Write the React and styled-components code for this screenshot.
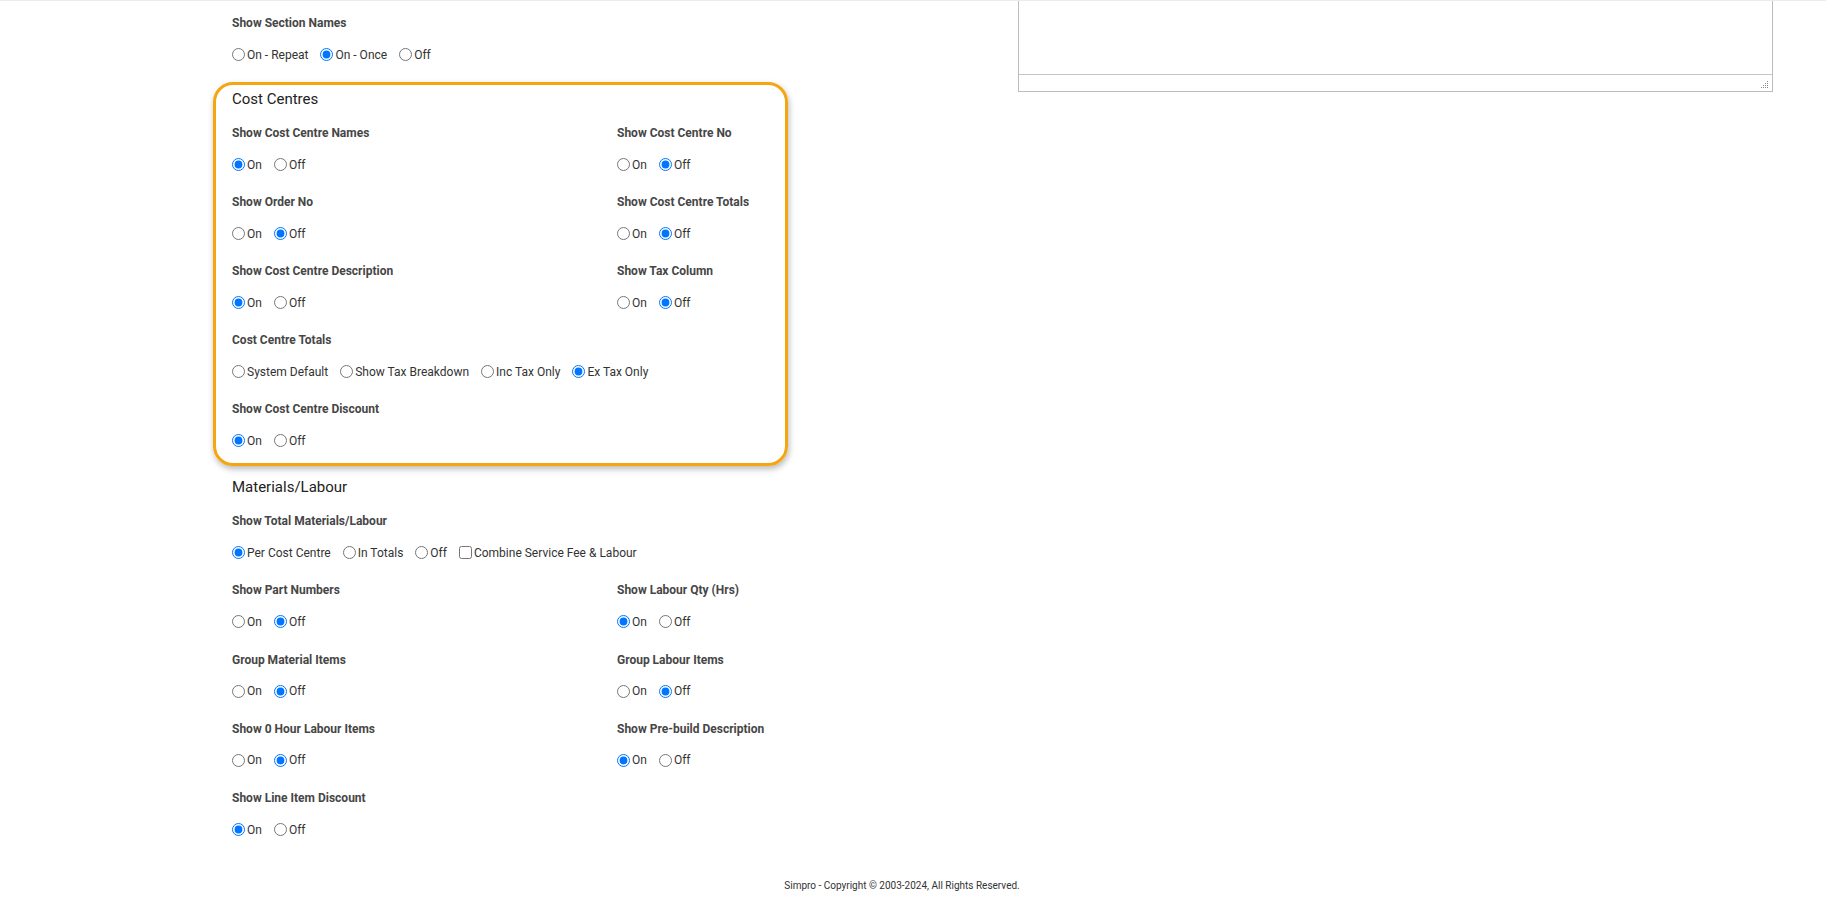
import React from 'react'
import styled, { createGlobalStyle } from 'styled-components'

const GlobalStyle = createGlobalStyle`
    html, body {
        margin: 0;
        padding: 0;
        background: #fff;
    }
    body {
        font-family: Roboto, "Liberation Sans", Arial, sans-serif;
        border-top: 1px solid #ececec;
    }
`

const Page = styled.div`
    min-height: calc(100vh - 1px);
    display: flex;
    flex-direction: column;
`
const Main = styled.div`
    display: flex;
    align-items: flex-start;
    padding-left: 213px;
`
const FormColumn = styled.div`
    width: 575px;
`
const SideColumn = styled.div`
    width: 755px;
    margin-left: 230px;
`
const Section = styled.div`
    margin-top: ${p => p.$top || 0}px;
    padding: 4px 14px ${p => p.$bottom || 11}px 16px;
    border: 3px solid ${p => p.$highlight ? '#f5a60f' : 'transparent'};
    border-radius: 20px;
    box-shadow: ${p => p.$highlight ? '1px 3px 6px rgba(0,0,0,0.28)' : 'none'};
`
const Heading = styled.h3`
    margin: 0 0 16px;
    font-size: 15px;
    line-height: 20px;
    font-weight: 400;
    color: #222;
`
const Fields = styled.div`
    display: grid;
    grid-template-columns: 385px 1fr;
    row-gap: ${p => p.$gap || 21}px;
`
const Field = styled.div`
    grid-column: ${p => p.$full ? '1 / -1' : 'auto'};
`
const Label = styled.div`
    font-size: 12px;
    line-height: 16px;
    font-weight: 700;
    color: #464646;
    margin-bottom: 15px;
`
const Options = styled.div`
    display: flex;
    align-items: center;
    height: 17px;
    gap: 12px;
`
const Option = styled.label`
    display: flex;
    align-items: center;
    gap: 2px;
    font-size: 12px;
    color: #333;
    cursor: pointer;
    white-space: nowrap;

    input {
        margin: 0;
        width: 13px;
        height: 13px;
    }
`
const Editor = styled.div`
    height: 90px;
    border: 1px solid #bdbdbd;
    border-top: none;
    display: flex;
    flex-direction: column;
`
const EditorBody = styled.div`
    flex: 1;
`
const EditorBar = styled.div`
    height: 14px;
    border-top: 1px solid #c6c6c6;
    display: flex;
    justify-content: flex-end;
    align-items: flex-end;
    padding: 0 3px 2px 0;
`
const Footer = styled.div`
    margin-top: auto;
    padding: 0 22px 13px 0;
    text-align: center;
    font-size: 10px;
    line-height: 14px;
    color: #333;
`

const onOff = (on) => ({ options: ['On', 'Off'], checked: on ? 0 : 1 })

const sections = [
    {
        top: 7,
        fields: [
            { label: 'Show Section Names', options: ['On - Repeat', 'On - Once', 'Off'], checked: 1, full: true },
        ],
    },
    {
        top: 5,
        bottom: 14,
        highlight: true,
        title: 'Cost Centres',
        fields: [
            { label: 'Show Cost Centre Names', ...onOff(true) },
            { label: 'Show Cost Centre No', ...onOff(false) },
            { label: 'Show Order No', ...onOff(false) },
            { label: 'Show Cost Centre Totals', ...onOff(false) },
            { label: 'Show Cost Centre Description', ...onOff(true) },
            { label: 'Show Tax Column', ...onOff(false) },
            { label: 'Cost Centre Totals', options: ['System Default', 'Show Tax Breakdown', 'Inc Tax Only', 'Ex Tax Only'], checked: 3, full: true },
            { label: 'Show Cost Centre Discount', ...onOff(true) },
        ],
    },
    {
        top: 4,
        gap: 21.25,
        title: 'Materials/Labour',
        fields: [
            { label: 'Show Total Materials/Labour', options: ['Per Cost Centre', 'In Totals', 'Off'], checked: 0, checkbox: 'Combine Service Fee & Labour', full: true },
            { label: 'Show Part Numbers', ...onOff(false) },
            { label: 'Show Labour Qty (Hrs)', ...onOff(true) },
            { label: 'Group Material Items', ...onOff(false) },
            { label: 'Group Labour Items', ...onOff(false) },
            { label: 'Show 0 Hour Labour Items', ...onOff(false) },
            { label: 'Show Pre-build Description', ...onOff(true) },
            { label: 'Show Line Item Discount', ...onOff(true) },
        ],
    },
]

const Grip = () => (
    <svg width="9" height="9" viewBox="0 0 9 9">
        {[[7,1],[5,3],[7,3],[3,5],[5,5],[7,5],[1,7],[3,7],[5,7],[7,7]].map(([x, y], i) => (
            <rect key={i} x={x} y={y} width="1" height="1" fill="#8a8a8a" />
        ))}
    </svg>
)

const App = () => {
    return (
        <Page>
            <GlobalStyle />
            <Main>
                <FormColumn>
                    {sections.map((s, si) => (
                        <Section key={si} $top={s.top} $bottom={s.bottom} $highlight={s.highlight}>
                            {s.title && <Heading>{s.title}</Heading>}
                            <Fields $gap={s.gap}>
                                {s.fields.map((f, fi) => {
                                    const name = `f-${si}-${fi}`
                                    return (
                                        <Field key={fi} $full={f.full}>
                                            <Label>{f.label}</Label>
                                            <Options>
                                                {f.options.map((o, oi) => (
                                                    <Option key={oi}>
                                                        <input type="radio" name={name} defaultChecked={oi === f.checked} />
                                                        <span>{o}</span>
                                                    </Option>
                                                ))}
                                                {f.checkbox && (
                                                    <Option>
                                                        <input type="checkbox" />
                                                        <span>{f.checkbox}</span>
                                                    </Option>
                                                )}
                                            </Options>
                                        </Field>
                                    )
                                })}
                            </Fields>
                        </Section>
                    ))}
                </FormColumn>
                <SideColumn>
                    <Editor>
                        <EditorBody />
                        <EditorBar><Grip /></EditorBar>
                    </Editor>
                </SideColumn>
            </Main>
            <Footer>Simpro - Copyright © 2003-2024, All Rights Reserved.</Footer>
        </Page>
    )
}

export default App
